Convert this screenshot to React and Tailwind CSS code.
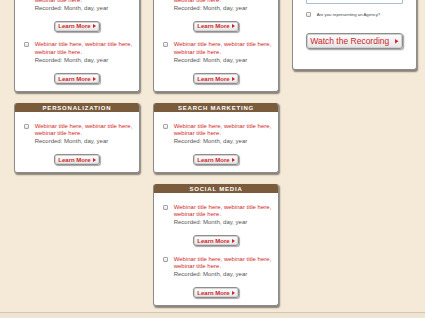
import React from "react";

function Checkbox() {
  return (
    <div className="w-[5px] h-[5px] shrink-0 rounded-[1px] border border-[#a5a5a5] bg-gradient-to-b from-white to-[#e2e2e2]" />
  );
}

function Tri({ w = 3, h = 4 }) {
  return (
    <svg width={w} height={h} viewBox="0 0 3 4" className="shrink-0">
      <path d="M0 0L3 2L0 4Z" fill="#cf1f2a" />
    </svg>
  );
}

function LearnMore() {
  return (
    <div className="w-[46px] h-[11px] rounded-[3px] border border-[#8e8e8e] bg-gradient-to-b from-white to-[#e6e6e6] shadow-[1px_1px_1px_rgba(0,0,0,0.35),inset_0_0_0_1px_#d4d4d4] flex items-center justify-center gap-[2px]">
      <span className="text-[6px] font-bold text-[#cf1f2a] leading-none whitespace-nowrap">Learn More</span>
      <Tri />
    </div>
  );
}

function Item({ first }) {
  return (
    <div className={first ? "" : "mt-[9.5px]"}>
      <div className="flex pl-[8.7px] pr-[3px]">
        <div className="mt-[1px]">
          <Checkbox />
        </div>
        <div className="ml-[6px] text-[6px] leading-[7.7px] whitespace-nowrap">
          <div className="text-[#cf1f2a]">Webinar title here, webinar title here,</div>
          <div className="text-[#cf1f2a]">webinar title here.</div>
          <div className="text-[#555555]">Recorded: Month, day, year</div>
        </div>
      </div>
      <div className="flex justify-center mt-[8.5px]">
        <LearnMore />
      </div>
    </div>
  );
}

function Card({ title, count = 1 }) {
  return (
    <div className="bg-white rounded-[3px] border border-t-0 border-[#8c8c8c] shadow-[1px_1.5px_1.5px_rgba(0,0,0,0.45)] overflow-hidden">
      <div className="h-[9px] bg-[#7a5b3c] flex items-center justify-center text-white text-[6px] font-bold tracking-[0.8px] leading-none">
        {title}
      </div>
      <div className="pt-[10.5px] pb-[7px]">
        {Array.from({ length: count }).map((_, i) => (
          <Item key={i} first={i === 0} />
        ))}
      </div>
    </div>
  );
}

export default function App() {
  return (
    <div className="w-[425px] h-[318px] overflow-hidden bg-[#f5e9d7] font-['Liberation_Sans',Arial,sans-serif]">
      <div className="flex items-start gap-[13px] pl-[14px] mt-[-30.2px]">
        <div className="w-[126px] flex flex-col gap-[11px]">
          <Card title="EMAIL MARKETING" count={2} />
          <Card title="PERSONALIZATION" count={1} />
        </div>
        <div className="w-[126px] flex flex-col gap-[11px]">
          <Card title="ANALYTICS" count={2} />
          <Card title="SEARCH MARKETING" count={1} />
          <Card title="SOCIAL MEDIA" count={2} />
        </div>
        <div className="w-[125px]">
          <div className="bg-white rounded-[3px] border border-t-0 border-[#8c8c8c] shadow-[1px_1.5px_1.5px_rgba(0,0,0,0.45)] overflow-hidden">
            <div className="h-[9px] bg-[#7a5b3c]" />
            <div className="px-[13px] pt-[10px] pb-[19.7px]">
              <div className="h-[15.5px] rounded-[1px] border border-[#a8bcd2] bg-white" />
              <div className="flex items-center mt-[7.4px] h-[5px]">
                <Checkbox />
                <span className="ml-[5.7px] text-[4.3px] leading-[5px] text-[#444444] whitespace-nowrap">
                  Are you representing an Agency?
                </span>
              </div>
              <div className="mt-[16.6px] h-[16px] rounded-[3px] border border-[#8e8e8e] bg-gradient-to-b from-white to-[#e4e4e4] shadow-[1px_1px_1.5px_rgba(0,0,0,0.4),inset_0_0_0_1px_#d2d2d2] flex items-center justify-center gap-[6px]">
                <span className="text-[8.5px] leading-none text-[#cf1f2a] whitespace-nowrap">Watch the Recording</span>
                <Tri w={3.5} h={4.5} />
              </div>
            </div>
          </div>
        </div>
      </div>
      <div className="mt-[5.5px] h-[20px] border-t border-[#d3c6b3] bg-[#efe3d1]" />
    </div>
  );
}
